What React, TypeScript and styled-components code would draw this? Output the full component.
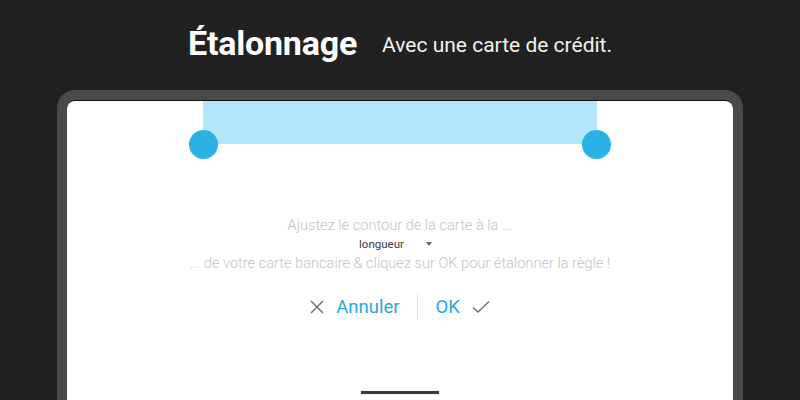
import React from 'react';
import styled, { createGlobalStyle } from 'styled-components';

const GlobalStyle = createGlobalStyle`
	html, body {
		margin: 0;
		padding: 0;
		background: #212121;
	}
	body {
		font-family: Roboto, "Noto Sans", sans-serif;
	}
`;

const Page = styled.div`
	width: 800px;
	height: 400px;
	overflow: hidden;
	background: #212121;
	display: flex;
	flex-direction: column;
`;

const Header = styled.div`
	flex-shrink: 0;
	height: 90px;
	display: flex;
	align-items: center;
	justify-content: center;
	gap: 25px;
	padding-bottom: 4px;
	box-sizing: border-box;
`;

const Title = styled.h1`
	margin: 0;
	font-size: 34px;
	font-weight: 700;
	color: #ffffff;
	letter-spacing: -0.2px;
`;

const Subtitle = styled.span`
	font-size: 21px;
	color: #f2f2f2;
	margin-top: 4px;
`;

const Phone = styled.div`
	flex-shrink: 0;
	margin: 0 57px;
	height: 340px;
	border: 10px solid #4a4a4a;
	border-bottom: none;
	border-radius: 18px 18px 0 0;
	background: #4a4a4a;
	display: flex;
`;

const Screen = styled.div`
	flex: 1;
	background: #ffffff;
	border-top: 1px solid #111;
	border-radius: 8px 8px 0 0;
	display: flex;
	flex-direction: column;
	align-items: center;
`;

const CardZone = styled.div`
	position: relative;
	width: 394px;
	height: 43px;
	background: #b3e5fc;
	border-radius: 0 0 7px 7px;
`;

const Handle = styled.span<{ $side: 'left' | 'right' }>`
	position: absolute;
	bottom: -15px;
	${(p) => (p.$side === 'left' ? 'left: -14px;' : 'right: -14px;')}
	width: 29px;
	height: 29px;
	border-radius: 50%;
	background: #2cb1e6;
`;

const Instructions = styled.div`
	margin-top: 71px;
	display: flex;
	flex-direction: column;
	align-items: center;
	color: #c4c4c4;
	font-size: 14.6px;
	font-weight: 300;
	line-height: 20px;
`;

const Dropdown = styled.div`
	display: flex;
	align-items: center;
	gap: 22px;
	padding-right: 9px;
	height: 18px;
	font-size: 11.5px;
	font-weight: 400;
	color: #3c3c3c;
`;

const Caret = styled.span`
	width: 0;
	height: 0;
	border-left: 3px solid transparent;
	border-right: 3px solid transparent;
	border-top: 4px solid #666;
`;

const Actions = styled.div`
	margin-top: 16px;
	height: 36px;
	display: flex;
	align-items: center;
`;

const ActionButton = styled.button`
	border: none;
	background: none;
	padding: 0;
	display: flex;
	align-items: center;
	gap: 12px;
	font-family: Roboto, sans-serif;
	font-size: 18.5px;
	color: #2aa6de;
	cursor: pointer;
`;

const Divider = styled.span`
	width: 1px;
	height: 26px;
	background: #e6e6e6;
	margin: 0 17px 0 18px;
`;

const HomeBar = styled.div`
	margin-top: 66px;
	width: 78px;
	height: 3px;
	background: #3a3a3a;
	box-shadow: 0 0 1px #999;
`;

const XIcon = () => (
	<svg width="14" height="14" viewBox="0 0 14 14" fill="none" stroke="#777" strokeWidth="1.6">
		<path d="M1 1L13 13M13 1L1 13" />
	</svg>
);

const CheckIcon = () => (
	<svg width="18" height="14" viewBox="0 0 18 14" fill="none" stroke="#777" strokeWidth="1.6">
		<path d="M1 7.5L6 12L17 1.5" />
	</svg>
);

const App = () => {
	return (
		<Page>
			<GlobalStyle />
			<Header>
				<Title>Étalonnage</Title>
				<Subtitle>Avec une carte de crédit.</Subtitle>
			</Header>
			<Phone>
				<Screen>
					<CardZone>
						<Handle $side="left" />
						<Handle $side="right" />
					</CardZone>
					<Instructions>
						<span>Ajustez le contour de la carte à la ...</span>
						<Dropdown>
							<span>longueur</span>
							<Caret />
						</Dropdown>
						<span>... de votre carte bancaire &amp; cliquez sur OK pour étalonner la règle !</span>
					</Instructions>
					<Actions>
						<ActionButton>
							<XIcon />
							Annuler
						</ActionButton>
						<Divider />
						<ActionButton>
							OK
							<CheckIcon />
						</ActionButton>
					</Actions>
					<HomeBar />
				</Screen>
			</Phone>
		</Page>
	);
};

export default App;
